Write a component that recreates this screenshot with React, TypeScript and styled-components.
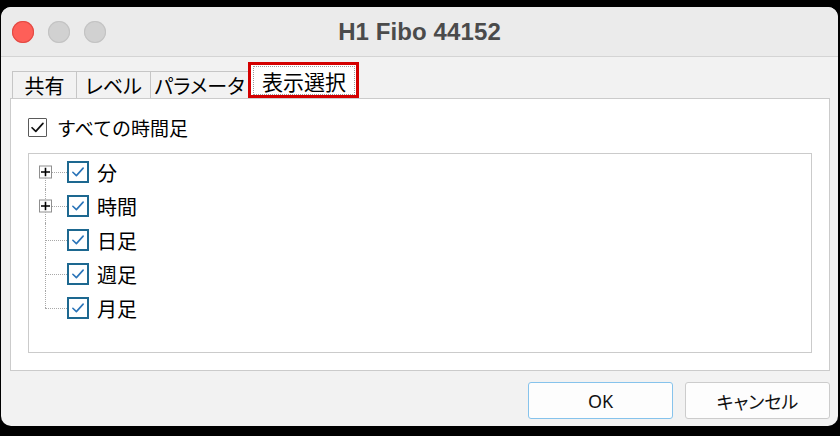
import React from "react";
import styled, { createGlobalStyle, css } from "styled-components";

const Global = createGlobalStyle`
  html, body { margin: 0; padding: 0; background: #000; }
  body { width: 840px; height: 436px; overflow: hidden; }
  * { box-sizing: border-box; }
`;

const JP = `"Noto Sans CJK JP", "Noto Sans", sans-serif`;

const Screen = styled.div`
  width: 840px;
  height: 436px;
  padding: 7px 2px 10px 1px;
  background: #000;
`;

const Window = styled.div`
  width: 837px;
  height: 419px;
  border-radius: 10px;
  background: #f2f2f2;
  overflow: hidden;
  display: flex;
  flex-direction: column;
  font-family: ${JP};
  color: #000;
`;

const TitleBar = styled.div`
  height: 50px;
  flex: none;
  background: #ebebeb;
  border-bottom: 1px solid #d4d4d4;
  display: grid;
  grid-template-columns: 1fr auto 1fr;
  align-items: center;
  padding: 0 11px;
`;

const Lights = styled.div`
  display: flex;
  gap: 14px;
`;

const Light = styled.span<{ $color: string; $edge: string }>`
  width: 22px;
  height: 22px;
  border-radius: 50%;
  background: ${(p) => p.$color};
  box-shadow: inset 0 0 0 1px ${(p) => p.$edge};
`;

const Title = styled.div`
  font-family: "Liberation Sans", Arial, sans-serif;
  font-weight: 700;
  font-size: 24px;
  color: #4b4b4b;
  letter-spacing: 0.1px;
`;

const Body = styled.div`
  flex: 1;
  display: flex;
  flex-direction: column;
  padding: 0 8px 7px 9px;
`;

const TabStrip = styled.div`
  height: 41px;
  flex: none;
  display: flex;
  align-items: flex-end;
  padding-left: 2px;
`;

const Tab = styled.div<{ $w: number; $active?: boolean }>`
  width: ${(p) => p.$w}px;
  height: 27px;
  margin-right: -1px;
  border: 1px solid #c6c6c6;
  border-bottom: none;
  background: #f2f2f2;
  font-size: 20px;
  line-height: 1;
  font-feature-settings: "palt";
  display: flex;
  align-items: center;
  justify-content: center;
  padding-top: 1px;
  ${(p) =>
    p.$active &&
    css`
      height: 36px;
      border: 3px solid #d40000;
      border-bottom: 3px solid #d40000;
      background: #fff;
      padding: 1px 1px 0 2px;
      position: relative;
      z-index: 1;
    `}
`;

const FocusLabel = styled.span`
  flex: 1;
  align-self: stretch;
  display: flex;
  align-items: center;
  justify-content: center;
  border: 1px dotted #9a9a9a;
  font-size: 21px;
  padding-top: 1px;
`;

const Panel = styled.div`
  height: 273px;
  flex: none;
  background: #fff;
  border: 1px solid #cbcbcb;
  padding: 19px 17px 17px 17px;
  display: flex;
  flex-direction: column;
`;

const CheckRow = styled.label`
  display: flex;
  align-items: center;
  gap: 10px;
  height: 19px;
  font-size: 19px;
`;

const PlainBox = styled.span`
  width: 19px;
  height: 19px;
  border: 1px solid #5a5a5a;
  border-radius: 1px;
  background: #fff;
  display: flex;
  align-items: center;
  justify-content: center;
`;

const TreeBox = styled.div`
  margin-top: 16px;
  flex: 1;
  border: 1px solid #cbcbcb;
  padding: 1px 0;
`;

const TreeRow = styled.div`
  height: 34px;
  display: flex;
  align-items: center;
`;

const Gutter = styled.div<{ $first?: boolean; $last?: boolean }>`
  width: 38px;
  align-self: stretch;
  position: relative;
  flex: none;
  &::before {
    content: "";
    position: absolute;
    left: 16px;
    top: ${(p) => (p.$first ? "50%" : "0")};
    bottom: ${(p) => (p.$last ? "50%" : "0")};
    border-left: 1px dotted #a8a8a8;
  }
  &::after {
    content: "";
    position: absolute;
    left: 16px;
    right: 0;
    top: 50%;
    border-top: 1px dotted #a8a8a8;
  }
`;

const PlusBox = styled.span`
  position: absolute;
  left: 10px;
  top: 50%;
  transform: translateY(-50%);
  width: 13px;
  height: 13px;
  background: #fff;
  border: 1px solid #8f8f8f;
  z-index: 1;
  display: flex;
  align-items: center;
  justify-content: center;
`;

const BlueBox = styled.span`
  width: 22px;
  height: 22px;
  flex: none;
  border: 2px solid #1d6890;
  background: #fff;
  display: flex;
  align-items: center;
  justify-content: center;
`;

const ItemText = styled.span`
  margin-left: 8px;
  font-size: 20px;
  line-height: 1;
  padding-top: 1px;
`;

const Footer = styled.div`
  display: flex;
  justify-content: flex-end;
  gap: 12px;
  padding-top: 11px;
`;

const Button = styled.button<{ $primary?: boolean }>`
  width: 145px;
  height: 37px;
  border-radius: 3px;
  background: #fdfdfd;
  border: 1px solid ${(p) => (p.$primary ? "#86c3ec" : "#cccccc")};
  font-family: "Noto Sans", ${JP};
  font-size: 18px;
  font-feature-settings: "palt";
  color: #111;
  display: flex;
  align-items: center;
  justify-content: center;
  padding: 0;
`;

const Check = ({ color, w }: { color: string; w: number }) => (
  <svg width={w} height={w} viewBox="0 0 14 14" fill="none">
    <polyline
      points="2.5,7.2 5.6,10.2 11.5,3.6"
      stroke={color}
      strokeWidth="1.4"
      strokeLinecap="round"
      strokeLinejoin="round"
    />
  </svg>
);

const Plus = () => (
  <svg width="9" height="9" viewBox="0 0 9 9">
    <path d="M0 4.5H9M4.5 0V9" stroke="#000" strokeWidth="1.6" />
  </svg>
);

const items = [
  { label: "分", plus: true },
  { label: "時間", plus: true },
  { label: "日足", plus: false },
  { label: "週足", plus: false },
  { label: "月足", plus: false },
];

const tabs = [
  { label: "共有", w: 65 },
  { label: "レベル", w: 75 },
  { label: "パラメータ", w: 99 },
];

export default function App() {
  return (
    <>
      <Global />
      <Screen>
        <Window>
          <TitleBar>
            <Lights>
              <Light $color="#fe5f58" $edge="#e24a44" />
              <Light $color="#d1d1d1" $edge="#c3c3c3" />
              <Light $color="#d1d1d1" $edge="#c3c3c3" />
            </Lights>
            <Title>H1 Fibo 44152</Title>
            <div />
          </TitleBar>
          <Body>
            <TabStrip>
              {tabs.map((t) => (
                <Tab key={t.label} $w={t.w}>
                  {t.label}
                </Tab>
              ))}
              <Tab $w={111} $active>
                <FocusLabel>表示選択</FocusLabel>
              </Tab>
            </TabStrip>
            <Panel>
              <CheckRow>
                <PlainBox>
                  <Check color="#111" w={17} />
                </PlainBox>
                すべての時間足
              </CheckRow>
              <TreeBox>
                {items.map((it, i) => (
                  <TreeRow key={it.label}>
                    <Gutter $first={i === 0} $last={i === items.length - 1}>
                      {it.plus && (
                        <PlusBox>
                          <Plus />
                        </PlusBox>
                      )}
                    </Gutter>
                    <BlueBox>
                      <Check color="#2a74b8" w={16} />
                    </BlueBox>
                    <ItemText>{it.label}</ItemText>
                  </TreeRow>
                ))}
              </TreeBox>
            </Panel>
            <Footer>
              <Button $primary>OK</Button>
              <Button>キャンセル</Button>
            </Footer>
          </Body>
        </Window>
      </Screen>
    </>
  );
}
